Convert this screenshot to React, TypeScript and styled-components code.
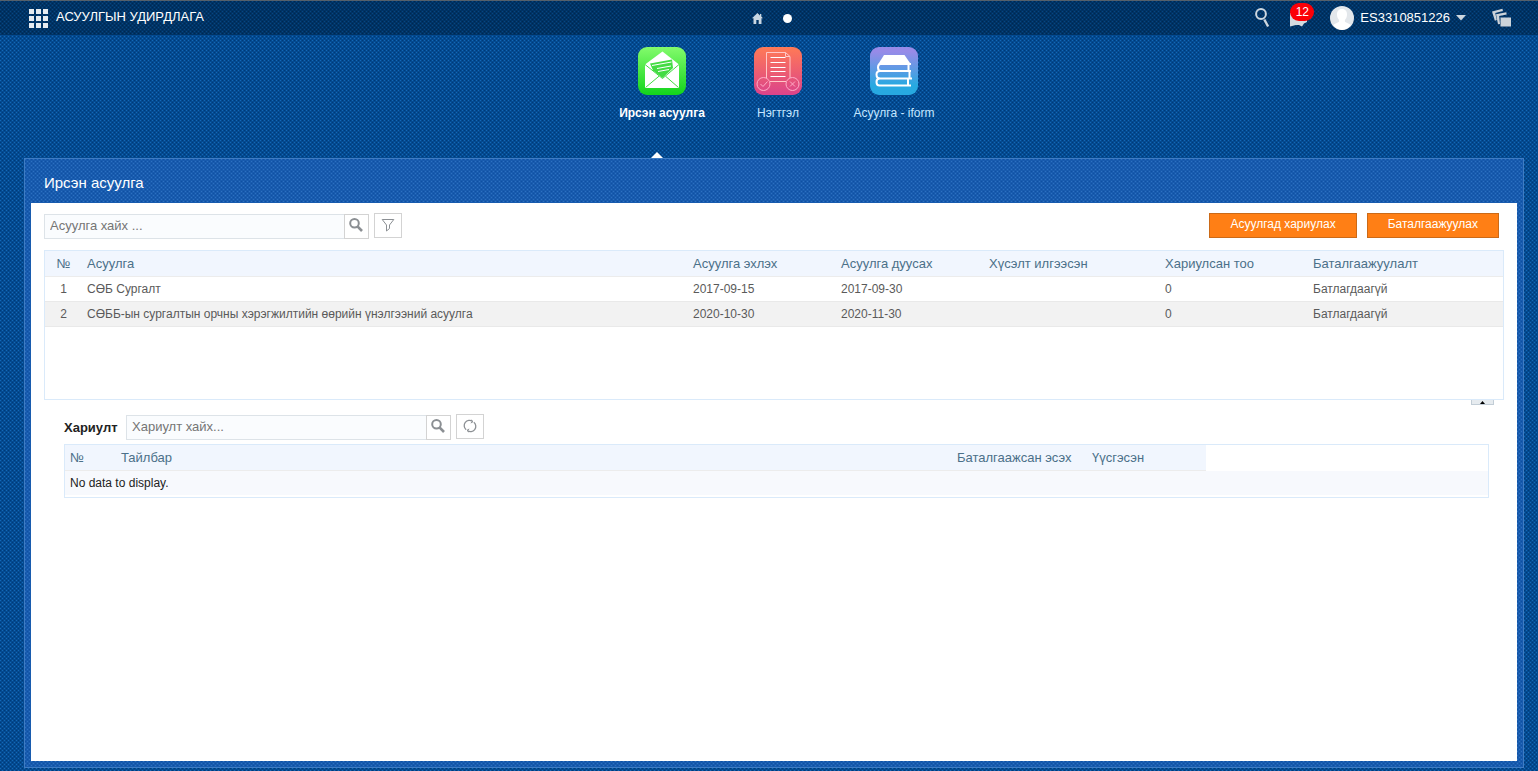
import React from "react";
import styled, { createGlobalStyle, css } from "styled-components";

const GlobalStyle = createGlobalStyle`
  *, *::before, *::after { box-sizing: border-box; }
  body {
    margin: 0;
    font-family: "Liberation Sans", Arial, sans-serif;
    font-size: 12px;
    color: #333;
    background: #004a8f;
  }
  button, input { font-family: inherit; }
`;

/* Fine woven texture: light and dark one-pixel dots staggered on a mid tone. */
const dot = (color: string) => `conic-gradient(from 0deg at 1px 1px, transparent 270deg, ${color} 0)`;

const weave = (light: string, mid: string, dark: string) => css`
  background-color: ${mid};
  background-image: ${dot(light)}, ${dot(light)}, ${dot(dark)}, ${dot(dark)};
  background-size: 4px 4px;
  background-position: 0 0, 2px 2px, 2px 0, 0 2px;
`;

const Page = styled.div`
  min-height: 100vh;
  display: flex;
  flex-direction: column;
  ${weave("#1468b6", "#044a90", "#003a78")}
`;

const TopBar = styled.header`
  height: 35px;
  display: grid;
  grid-template-columns: 1fr auto 1fr;
  align-items: center;
  padding: 0 26px 0 28px;
  border-top: 1px solid #55606b;
  color: #fff;
  ${weave("#084680", "#003365", "#002850")}
`;

const Brand = styled.div`
  display: flex;
  align-items: center;
  gap: 8px;
  font-size: 13px;
  line-height: 16px;
`;

const BrandName = styled.span`
  padding-bottom: 2px;
`;

const Pager = styled.nav`
  display: flex;
  align-items: center;
  gap: 20px;
  padding-left: 4px;
`;

const PlainLink = styled.a`
  display: flex;
  color: inherit;
  text-decoration: none;
`;

const Dot = styled.span`
  width: 9px;
  height: 9px;
  border-radius: 50%;
  background: #fff;
`;

const Tools = styled.div`
  display: flex;
  justify-content: flex-end;
  align-items: center;
`;

const PlainButton = styled.button<{ $gap?: number }>`
  position: relative;
  display: flex;
  align-items: center;
  gap: 6px;
  margin: 0 0 0 ${(p) => p.$gap ?? 0}px;
  padding: 0;
  border: 0;
  background: none;
  color: #fff;
  font-size: 13px;
  line-height: 16px;
  cursor: pointer;
`;

const Badge = styled.span`
  position: absolute;
  top: -5px;
  left: 0;
  width: 24px;
  height: 18px;
  border-radius: 9px;
  background: #fb0007;
  font-size: 12px;
  line-height: 18px;
  text-align: center;
`;

const Modules = styled.nav`
  height: 123px;
  display: flex;
  justify-content: center;
  padding: 12px 0 0 18px;
`;

const ModuleLink = styled.a<{ $active?: boolean }>`
  position: relative;
  width: 116px;
  display: flex;
  flex-direction: column;
  align-items: center;
  gap: 10px;
  font-size: 12px;
  line-height: 16px;
  text-decoration: none;
  color: ${(p) => (p.$active ? "#fff" : "#c4e6ff")};
  font-weight: ${(p) => (p.$active ? "bold" : "normal")};
  ${(p) =>
    p.$active &&
    css`
      &::after {
        content: "";
        position: absolute;
        bottom: 0;
        left: 47px;
        border: 6px solid transparent;
        border-top: 0;
        border-bottom-color: #fff;
      }
    `}
`;

const Panel = styled.main`
  flex: 1;
  display: flex;
  flex-direction: column;
  margin: 0 14px 3px 24px;
  padding: 0 6px 6px;
  border: 1px solid #3f7cc3;
  ${weave("#2c70c0", "#185bae", "#0f50a2")}
`;

const PanelTitle = styled.h1`
  margin: 0;
  padding: 15px 13px 11px;
  color: #fff;
  font-size: 15px;
  font-weight: normal;
  line-height: 18px;
`;

const Content = styled.div`
  flex: 1;
  background: #fff;
  padding: 10px 13px;
`;

const Toolbar = styled.div`
  display: flex;
  align-items: flex-start;
  gap: 5px;
`;

const SearchBox = styled.form`
  display: flex;
  margin-top: 1px;
`;

const SearchInput = styled.input`
  width: 300px;
  height: 25px;
  padding: 0 5px 2px;
  border: 1px solid #dde3e8;
  border-right: 0;
  background: #fafcfe;
  color: #555;
  font-size: 13px;
  outline: none;
  &::placeholder { color: #757575; opacity: 1; }
`;

const SquareButton = styled.button<{ $wide?: boolean }>`
  width: ${(p) => (p.$wide ? 28 : 25)}px;
  height: 25px;
  padding: ${(p) => (p.$wide ? "0 0 2px" : "0 2px 3px 0")};
  display: flex;
  align-items: center;
  justify-content: center;
  border: 1px solid #d3d3d3;
  background: #fff;
  color: #8b8f93;
`;

const Actions = styled.div`
  display: flex;
  gap: 10px;
  margin-left: auto;
  padding-right: 5px;
`;

const ActionButton = styled.button`
  height: 25px;
  padding: 0 20px 3px;
  border: 1px solid #cb6a18;
  background: #ff7f15;
  color: #fff;
  font-size: 12px;
  white-space: nowrap;
`;

const GridFrame = styled.div<{ $tall?: boolean }>`
  margin-top: ${(p) => (p.$tall ? 11 : 4)}px;
  min-height: ${(p) => (p.$tall ? 150 : 54)}px;
  border: 1px solid #daeafa;
`;

const Grid = styled.table`
  width: 100%;
  table-layout: fixed;
  border-collapse: separate;
  border-spacing: 0;
`;

const HeadCell = styled.th<{ $center?: boolean; $blank?: boolean }>`
  height: 26px;
  padding: 0 5px;
  text-align: ${(p) => (p.$center ? "center" : "left")};
  font-size: 13px;
  font-weight: normal;
  color: #4b7089;
  background: ${(p) => (p.$blank ? "#fff" : "#f1f6fe")};
  border-bottom: 1px solid ${(p) => (p.$blank ? "#fff" : "#ececec")};
  white-space: nowrap;
`;

const Cell = styled.td<{ $center?: boolean }>`
  height: 25px;
  padding: 0 5px;
  text-align: ${(p) => (p.$center ? "center" : "left")};
  color: #5a5a5a;
  border-bottom: 1px solid #e9e9e9;
  white-space: nowrap;
`;

const Row = styled.tr<{ $shaded?: boolean }>`
  background: ${(p) => (p.$shaded ? "#f2f2f2" : "#fff")};
`;

const EmptyCell = styled.td`
  height: 24px;
  padding: 0 5px;
  color: #222;
  background: #f7f9fd;
`;

const CollapseRow = styled.div`
  display: flex;
  justify-content: flex-end;
  padding-right: 10px;
`;

const CollapseButton = styled.button`
  width: 23px;
  height: 5px;
  padding: 0;
  display: flex;
  align-items: center;
  justify-content: center;
  border: 1px solid #c2cdd6;
  border-top: 0;
  background: #e6ebef;
`;

const Answers = styled.section`
  margin: 9px 15px 0 20px;
`;

const AnswersTitle = styled.label`
  width: 57px;
  padding-top: 5px;
  color: #222;
  font-size: 13px;
  font-weight: bold;
  line-height: 18px;
`;

const AppsIcon = () => (
  <svg width="20" height="20" viewBox="0 0 20 20" fill="#e6ebf0" aria-hidden="true">
    {[1, 8, 15].map((y) => [1, 8, 15].map((x) => <rect key={`${x}-${y}`} x={x} y={y} width="5" height="5" />))}
  </svg>
);

const HomeIcon = () => (
  <svg width="11" height="11" viewBox="0 0 11 11" fill="#c9d6e2" aria-hidden="true">
    <path d="M5.5 0 0 5.3h1.5V11h2.8V7h2.4v4h2.8V5.3H11L9.3 3.6V1H8v1.4z" />
  </svg>
);

const TopSearchIcon = () => (
  <svg width="16" height="20" viewBox="0 0 16 20" fill="none" stroke="#cdd7e0" aria-hidden="true">
    <circle cx="6" cy="6" r="4.9" strokeWidth="2" />
    <path d="m9.300 11.500 3.800 7" strokeWidth="2.4" />
  </svg>
);

const MessageIcon = () => (
  <svg width="20" height="20" viewBox="0 0 20 20" fill="#d4dae0" aria-hidden="true">
    <path d="M0 5h17v9l-3 1.500-2 3L9 17H6l-6 1.500z" />
  </svg>
);

const Avatar = () => (
  <svg width="24" height="24" viewBox="0 0 24 24" aria-hidden="true">
    <circle cx="12" cy="12" r="12" fill="#e3e7eb" />
    <path
      d="M12 3c3.600 0 5.200 2.500 5 5.800-.1 2.400-1 4.200-2.100 5.200v1.800c1.500 1.300 4.200 1.400 5.900 3.200A11.800 11.800 0 0 1 12 24a11.800 11.800 0 0 1-8.800-5c1.700-1.800 4.400-1.900 5.900-3.200V14C8 13 7.100 11.200 7 8.800 6.800 5.500 8.400 3 12 3z"
      fill="#fff"
    />
  </svg>
);

const Caret = () => (
  <svg width="10" height="6" viewBox="0 0 10 6" fill="#cdd7e0" aria-hidden="true">
    <path d="M0 0h10L5 5.500z" />
  </svg>
);

const WindowsIcon = () => (
  <svg width="20" height="20" viewBox="0 0 20 20" fill="#ccd3da" aria-hidden="true">
    <path d="M0 3.500 10.500.8l.4 2.200-7.600 2.100 1.500 7-1.900.6z" />
    <path d="m4 6.300 10.300-2 .4 2.200-7.500 1.500.8 8-2 .3z" />
    <path d="M8.500 9.500H19v9H8.500z" />
  </svg>
);

const InboxIcon = () => (
  <svg width="48" height="48" viewBox="0 0 48 48" aria-hidden="true">
    <defs>
      <linearGradient id="inbox" x2="0" y2="1">
        <stop stopColor="#83fb6c" />
        <stop offset="1" stopColor="#12d41c" />
      </linearGradient>
    </defs>
    <rect width="48" height="48" rx="9" fill="url(#inbox)" />
    <path d="M7 17.500 24.500 4.500 41 17.500V41H7z" fill="#fff" />
    <path d="M12 16.500 34 12.500l1 8.500-10.500 10-9.500-7.500z" fill="#43dc43" />
    <path d="m14 18.500 19.500-3.500M19 21.500l14-2.500M20 24.500l11-2" stroke="#fff" strokeWidth="1" />
    <path d="m7 17.500 17.500 14L41 17.500M7.500 40.500 21 29.200M40.500 40.500 27.500 29.200" fill="none" stroke="#43dc43" strokeWidth="1" />
  </svg>
);

const ReportIcon = () => (
  <svg width="48" height="48" viewBox="0 0 48 48" fill="none" aria-hidden="true">
    <defs>
      <linearGradient id="report" x2="0" y2="1">
        <stop stopColor="#ff7a56" />
        <stop offset="1" stopColor="#db438b" />
      </linearGradient>
    </defs>
    <rect width="48" height="48" rx="9" fill="url(#report)" />
    <path d="M12.500 31V5.500h19l4.500 4V31M31.500 5.500v4H36M16 34.500h16" stroke="#ffc7c7" />
    <path d="M16.500 10.500h15M16.500 15.500h15M16.500 20.500h15M16.500 24.500h15M16.500 29.500h15" stroke="#fff" />
    <g stroke="#ffacc7">
      <circle cx="9.500" cy="37" r="6.500" />
      <circle cx="38.500" cy="37" r="6.500" />
      <path d="m6.500 37 2.500 2.500 4.500-5M36 34.500l5 5M41 34.500l-5 5" />
    </g>
  </svg>
);

const BooksIcon = () => (
  <svg width="48" height="48" viewBox="0 0 48 48" fill="none" aria-hidden="true">
    <defs>
      <linearGradient id="books" x2="0" y2="1">
        <stop offset=".1" stopColor="#978be8" />
        <stop offset=".8" stopColor="#27a9e1" />
      </linearGradient>
    </defs>
    <rect width="48" height="48" rx="9" fill="url(#books)" />
    <path d="M14 8h20.500l6.500 9.500H8z" fill="#fff" />
    <g stroke="#fff" strokeWidth="2" strokeLinejoin="round">
      <path d="M10 17h31M41 24H11c-2.500 0-3-1.500-3-3.500s.5-3.500 2.500-3.500M38.500 17.500v6" />
      <path d="M42 31.500H10c-2.500 0-3.500-1.500-3.500-4s1-3.500 3.500-3.500h31M39.500 24.500v6.500" />
      <path d="M41 38.500H9.500C7 38.500 6.500 37 6.500 35s.5-3.500 3-3.500M38 32v6" />
    </g>
  </svg>
);

const SearchIcon = () => (
  <svg width="14" height="14" viewBox="0 0 14 14" fill="none" stroke="currentColor" aria-hidden="true">
    <circle cx="5.500" cy="5.300" r="4.300" strokeWidth="2" />
    <path d="m8.500 8.300 4.500 4.700" strokeWidth="2.600" />
  </svg>
);

const FilterIcon = () => (
  <svg width="14" height="14" viewBox="0 0 14 14" fill="none" stroke="currentColor" aria-hidden="true">
    <path d="M1.200 1.500h11.600L8.500 7v3.500l-3 2.500V7z" />
  </svg>
);

const RefreshIcon = () => (
  <svg width="14" height="14" viewBox="0 0 14 14" fill="none" stroke="currentColor" aria-hidden="true">
    <path d="M3.200 10.700A5.200 5.200 0 0 1 9.600 2.500M10.800 3.300A5.200 5.200 0 0 1 4.400 11.500" strokeWidth="1.300" />
    <path d="M8 .8 10 2.700 7.800 4M6 13.200 4 11.300 6.200 10" />
  </svg>
);

const modules = [
  { label: "Ирсэн асуулга", Icon: InboxIcon, active: true },
  { label: "Нэгтгэл", Icon: ReportIcon },
  { label: "Асуулга - iform", Icon: BooksIcon },
];

const surveys = [
  { name: "СӨБ Сургалт", start: "2017-09-15", end: "2017-09-30" },
  { name: "СӨББ-ын сургалтын орчны хэрэгжилтийн өөрийн үнэлгээний асуулга", start: "2020-10-30", end: "2020-11-30" },
];

const Columns = ({ widths }: { widths: (number | null)[] }) => (
  <colgroup>
    {widths.map((w, i) => (
      <col key={i} width={w ?? undefined} />
    ))}
  </colgroup>
);

const Search = ({ id, placeholder, label }: { id: string; placeholder: string; label?: string }) => (
  <SearchBox role="search" onSubmit={(e) => e.preventDefault()}>
    <SearchInput id={id} aria-label={label} placeholder={placeholder} />
    <SquareButton aria-label="Хайх">
      <SearchIcon />
    </SquareButton>
  </SearchBox>
);

export default function App() {
  return (
    <Page>
      <GlobalStyle />
      <TopBar>
        <Brand>
          <AppsIcon />
          <BrandName>АСУУЛГЫН УДИРДЛАГА</BrandName>
        </Brand>
        <Pager>
          <PlainLink href="#home" aria-label="Нүүр">
            <HomeIcon />
          </PlainLink>
          <Dot />
        </Pager>
        <Tools>
          <PlainButton aria-label="Хайх">
            <TopSearchIcon />
          </PlainButton>
          <PlainButton $gap={19} aria-label="Мэдэгдэл">
            <MessageIcon />
            <Badge>12</Badge>
          </PlainButton>
          <PlainButton $gap={20}>
            <Avatar />
            <span>ES3310851226</span>
            <Caret />
          </PlainButton>
          <PlainButton $gap={26} aria-label="Цонхнууд">
            <WindowsIcon />
          </PlainButton>
        </Tools>
      </TopBar>

      <Modules>
        {modules.map(({ label, Icon, active }) => (
          <ModuleLink key={label} href="#module" $active={active}>
            <Icon />
            {label}
          </ModuleLink>
        ))}
      </Modules>

      <Panel>
        <PanelTitle>Ирсэн асуулга</PanelTitle>
        <Content>
          <Toolbar>
            <Search id="survey-search" label="Асуулга хайх" placeholder="Асуулга хайх ..." />
            <SquareButton $wide aria-label="Шүүлтүүр">
              <FilterIcon />
            </SquareButton>
            <Actions>
              <ActionButton>Асуулгад хариулах</ActionButton>
              <ActionButton>Баталгаажуулах</ActionButton>
            </Actions>
          </Toolbar>
          <GridFrame $tall>
            <Grid>
              <Columns widths={[37, null, 148, 148, 176, 148, 195]} />
              <thead>
                <tr>
                  <HeadCell $center>№</HeadCell>
                  <HeadCell>Асуулга</HeadCell>
                  <HeadCell>Асуулга эхлэх</HeadCell>
                  <HeadCell>Асуулга дуусах</HeadCell>
                  <HeadCell>Хүсэлт илгээсэн</HeadCell>
                  <HeadCell>Хариулсан тоо</HeadCell>
                  <HeadCell>Баталгаажуулалт</HeadCell>
                </tr>
              </thead>
              <tbody>
                {surveys.map((s, i) => (
                  <Row key={s.name} $shaded={i % 2 === 1}>
                    <Cell $center>{i + 1}</Cell>
                    <Cell>{s.name}</Cell>
                    <Cell>{s.start}</Cell>
                    <Cell>{s.end}</Cell>
                    <Cell />
                    <Cell>0</Cell>
                    <Cell>Батлагдаагүй</Cell>
                  </Row>
                ))}
              </tbody>
            </Grid>
          </GridFrame>
          <CollapseRow>
            <CollapseButton aria-label="Хураах">
              <svg width="5" height="3" viewBox="0 0 5 3" aria-hidden="true">
                <path d="M2.500 0 5 3H0z" />
              </svg>
            </CollapseButton>
          </CollapseRow>

          <Answers>
            <Toolbar>
              <AnswersTitle htmlFor="answer-search">Хариулт</AnswersTitle>
              <Search id="answer-search" placeholder="Хариулт хайх..." />
              <SquareButton $wide aria-label="Сэргээх">
                <RefreshIcon />
              </SquareButton>
            </Toolbar>
            <GridFrame>
              <Grid>
                <Columns widths={[51, null, 135, 119, 282]} />
                <thead>
                  <tr>
                    <HeadCell>№</HeadCell>
                    <HeadCell>Тайлбар</HeadCell>
                    <HeadCell>Баталгаажсан эсэх</HeadCell>
                    <HeadCell>Үүсгэсэн</HeadCell>
                    <HeadCell as="td" $blank />
                  </tr>
                </thead>
                <tbody>
                  <tr>
                    <EmptyCell colSpan={5}>No data to display.</EmptyCell>
                  </tr>
                </tbody>
              </Grid>
            </GridFrame>
          </Answers>
        </Content>
      </Panel>
    </Page>
  );
}
